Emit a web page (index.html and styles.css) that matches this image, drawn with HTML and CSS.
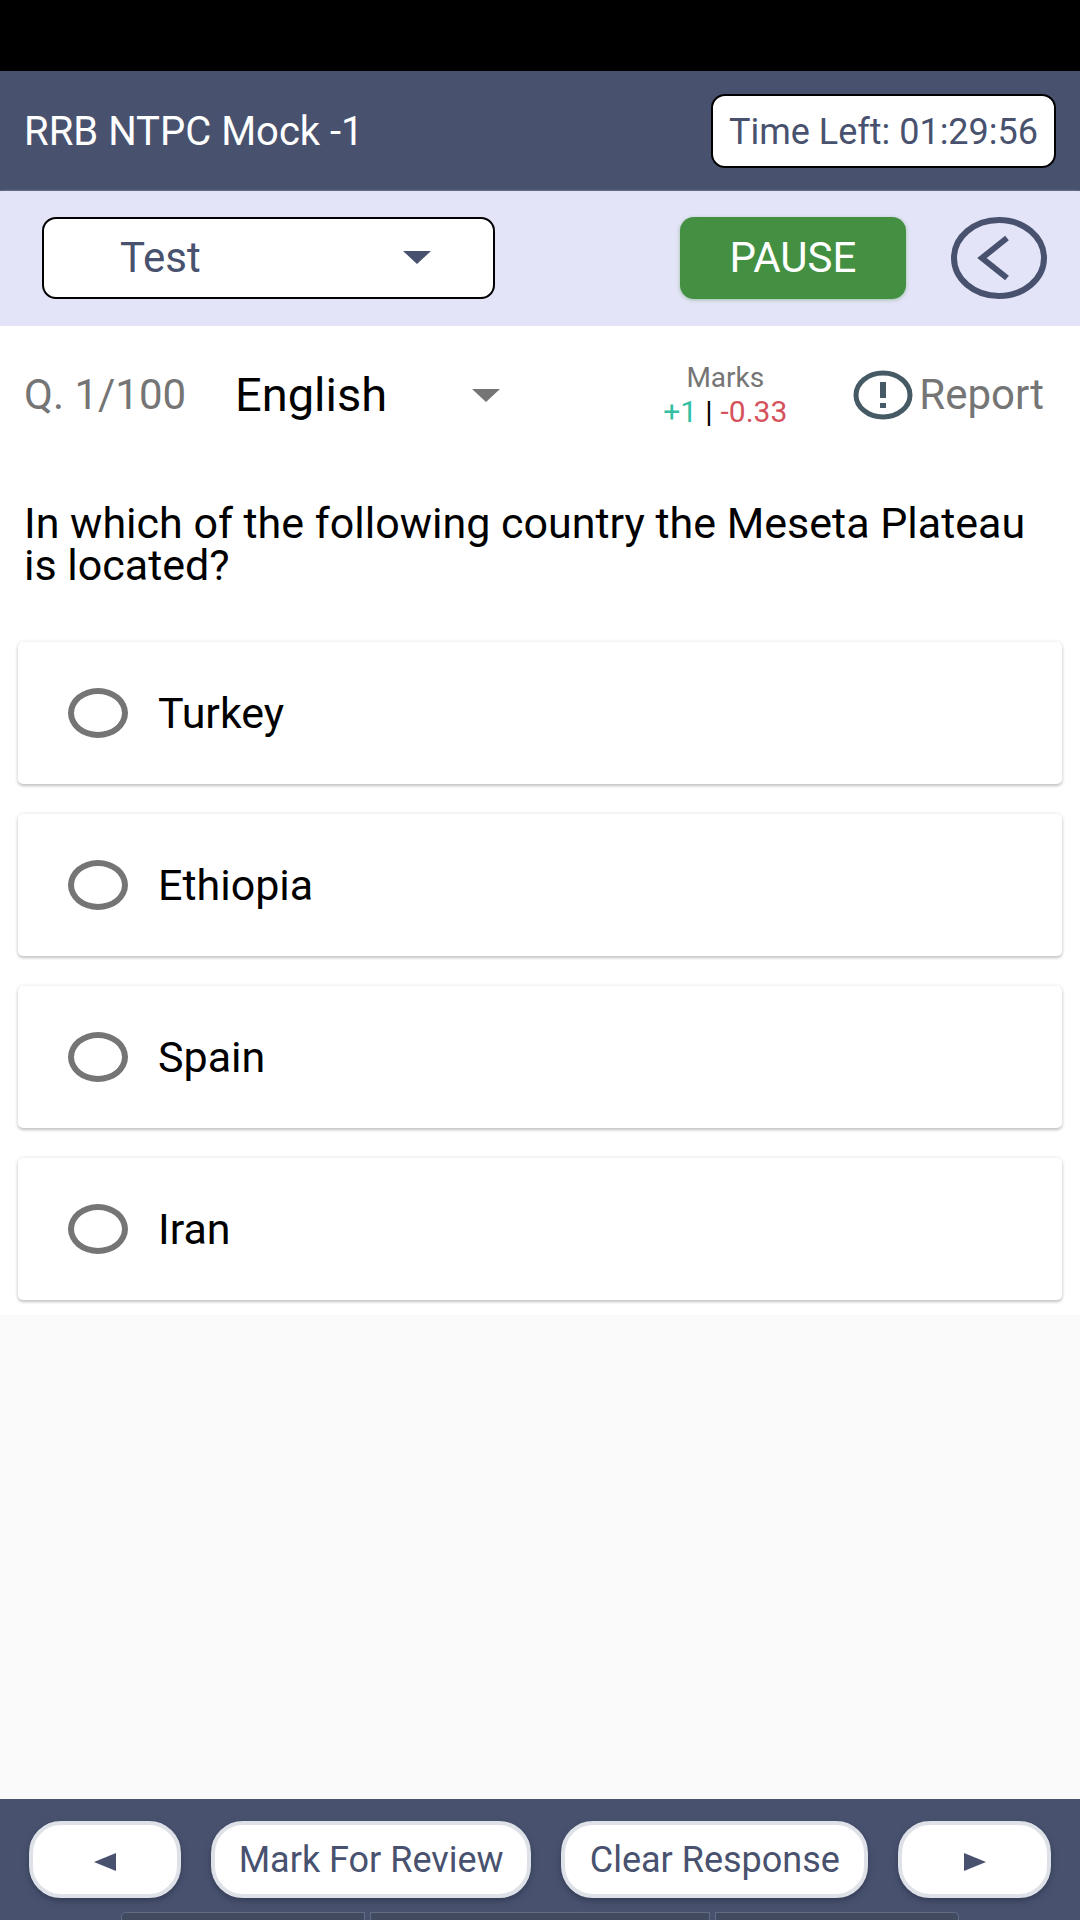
FILE: index.html
```html
<!DOCTYPE html>
<html lang="en">
<head>
<meta charset="utf-8">
<meta name="viewport" content="width=device-width, initial-scale=1">
<title>RRB NTPC Mock -1</title>
<link rel="stylesheet" href="styles.css">
</head>
<body>
<div class="status-bar"></div>
<header class="header">
  <h1 class="title">RRB NTPC Mock -1</h1>
  <div class="timer">Time Left: 01:29:56</div>
</header>
<div class="toolbar">
  <div class="picker section-picker">
    <select class="section-select" aria-label="Section"><option>Test</option></select>
    <svg class="caret" viewBox="0 0 28 13" aria-hidden="true"><path d="M0 0h28L14 13z"/></svg>
  </div>
  <button class="pause" type="button">PAUSE</button>
  <button class="back" type="button" aria-label="Open question list">
    <svg viewBox="0 0 98 82" aria-hidden="true"><ellipse cx="49" cy="41" rx="45" ry="38" stroke-width="6"/><path d="M57 21L32 41l25 20" stroke-width="6"/></svg>
  </button>
</div>
<main class="question">
  <div class="meta">
    <span class="number">Q. 1/100</span>
    <div class="picker language-picker">
      <select class="language-select" aria-label="Language"><option>English</option></select>
      <svg class="caret" viewBox="0 0 28 13" aria-hidden="true"><path d="M0 0h28L14 13z"/></svg>
    </div>
    <div class="marks">
      <span>Marks</span>
      <span class="score"><span class="plus">+1</span><span class="bar">|</span><span class="minus">-0.33</span></span>
    </div>
    <button class="report" type="button">
      <svg viewBox="0 0 60 50" aria-hidden="true"><ellipse cx="30" cy="25" rx="27" ry="22" fill="none" stroke="currentColor" stroke-width="5"/><path d="M27 12h6v16h-6zM27 33h6v5h-6z" fill="currentColor"/></svg>
      <span>Report</span>
    </button>
  </div>
  <form>
    <fieldset class="options">
      <legend class="prompt">In which of the following country the Meseta Plateau is located?</legend>
      <label class="option"><input type="radio" name="answer"><span>Turkey</span></label>
      <label class="option"><input type="radio" name="answer"><span>Ethiopia</span></label>
      <label class="option"><input type="radio" name="answer"><span>Spain</span></label>
      <label class="option"><input type="radio" name="answer"><span>Iran</span></label>
    </fieldset>
  </form>
</main>
<footer class="footer">
  <nav class="actions">
    <button class="action" type="button" aria-label="Previous"><svg viewBox="0 0 22 18" aria-hidden="true"><path d="M22 0v18L0 9z"/></svg></button>
    <button class="action" type="button">Mark For Review</button>
    <button class="action" type="button">Clear Response</button>
    <button class="action" type="button" aria-label="Next"><svg viewBox="0 0 22 18" aria-hidden="true"><path d="M0 0v18l22-9z"/></svg></button>
  </nav>
  <div class="tabs"><span></span><span></span><span></span></div>
</footer>
</body>
</html>
```
FILE: styles.css
```css
* { box-sizing: border-box; }

body {
  margin: 0;
  min-height: 100vh;
  display: flex;
  flex-direction: column;
  background: #fafafa;
  color: #000;
  font-family: Roboto, "Liberation Sans", sans-serif;
  font-size: 42px;
  line-height: 50px;
}

button, select {
  margin: 0;
  padding: 0;
  border: 0;
  background: none;
  color: inherit;
  font: inherit;
}

svg { display: block; }

.status-bar { height: 71px; background: #000; }

.header {
  display: flex;
  align-items: center;
  justify-content: space-between;
  height: 120px;
  padding: 0 24px;
  background: #48526f;
}

.title { margin: 0; padding-top: 2px; color: #fff; font-size: 40px; font-weight: 400; }

.timer {
  padding: 11px 16px 9px;
  border: 2px solid #000;
  border-radius: 14px;
  background: #fff;
  color: #48526f;
  font-size: 36px;
}

.toolbar {
  display: flex;
  align-items: center;
  height: 135px;
  padding: 0 32px 2px 42px;
  background: #e4e4f9;
  color: #48526f;
  box-shadow: 0 1px 3px #d8d8d8;
}

.picker { display: grid; align-items: center; }
.picker > * { grid-area: 1 / 1; }

.picker select { width: 100%; appearance: none; }

.caret {
  width: 28px;
  height: 13px;
  justify-self: end;
  fill: currentColor;
  pointer-events: none;
}

.section-picker { flex: 0 1 453px; }

.section-select {
  height: 82px;
  padding-left: 76px;
  border: 2px solid #000;
  border-radius: 14px;
  background: #fff;
}

.section-picker .caret { margin-right: 64px; }

.pause {
  width: 226px;
  height: 82px;
  margin-left: auto;
  border-radius: 14px;
  background: #449043;
  color: #fff;
  box-shadow: 0 1px 4px #9fbfa5;
}

.back { width: 98px; height: 82px; margin-left: 44px; }
.back svg { fill: none; stroke: #48526f; }

.question { padding-bottom: 15px; background: #fff; }

.meta {
  display: flex;
  align-items: center;
  height: 138px;
  padding: 0 36px 0 24px;
  color: #757575;
}

.number { width: 211px; }

.language-picker { width: 265px; }

.language-select { height: 60px; color: #000; font-size: 47px; }

.marks {
  display: flex;
  flex-direction: column;
  align-items: center;
  margin-left: auto;
  font-size: 28px;
  line-height: 34px;
}

.score { display: flex; gap: 8px; font-size: 30px; }
.plus { color: #33bfa3; }
.bar { color: #000; }
.minus { color: #d5525c; }

.report { display: flex; align-items: center; gap: 6px; margin-left: 66px; }
.report svg { width: 60px; height: 50px; color: #455a64; }

.options {
  display: flex;
  flex-direction: column;
  gap: 30px;
  min-width: 0;
  margin: 0;
  padding: 0 18px;
  border: 0;
}

.prompt {
  margin-bottom: 56px;
  padding: 38px 6px 0;
  font-size: 43px;
  line-height: 42px;
}

.option {
  display: flex;
  align-items: center;
  gap: 30px;
  height: 142px;
  padding-left: 50px;
  border-radius: 5px;
  background: #fff;
  font-size: 43px;
  box-shadow: 0 2px 3px #c4c4c4, 0 0 5px #e8e8e8;
}

.option input {
  width: 60px;
  height: 50px;
  margin: 0;
  border: 6px solid #757575;
  border-radius: 50%;
  appearance: none;
}

.option input:checked { background: #48526f; }

.footer {
  height: 121px;
  margin-top: auto;
  padding-top: 22px;
  background: #48526f;
}

.actions {
  display: grid;
  grid-template-columns: 152fr 321fr 307fr 153fr;
  gap: 30px;
  padding: 0 29px;
}

.action {
  height: 77px;
  border: 4px solid #dfe1e9;
  border-radius: 32px;
  background: #fff;
  color: #48526f;
  font-size: 36px;
  box-shadow: 0 3px 6px #343c55;
}

.action svg { width: 22px; height: 18px; margin: 4px auto 0; fill: currentColor; }

.tabs {
  display: grid;
  grid-template-columns: 244fr 340fr 244fr;
  gap: 5px;
  margin: 14px 121px 0;
}

.tabs span {
  height: 8px;
  border: 1px solid #626a86;
  border-bottom: 0;
  background: #424a60;
}

.tabs span:first-child { border-top-left-radius: 5px; }
.tabs span:last-child { border-top-right-radius: 5px; }
```
